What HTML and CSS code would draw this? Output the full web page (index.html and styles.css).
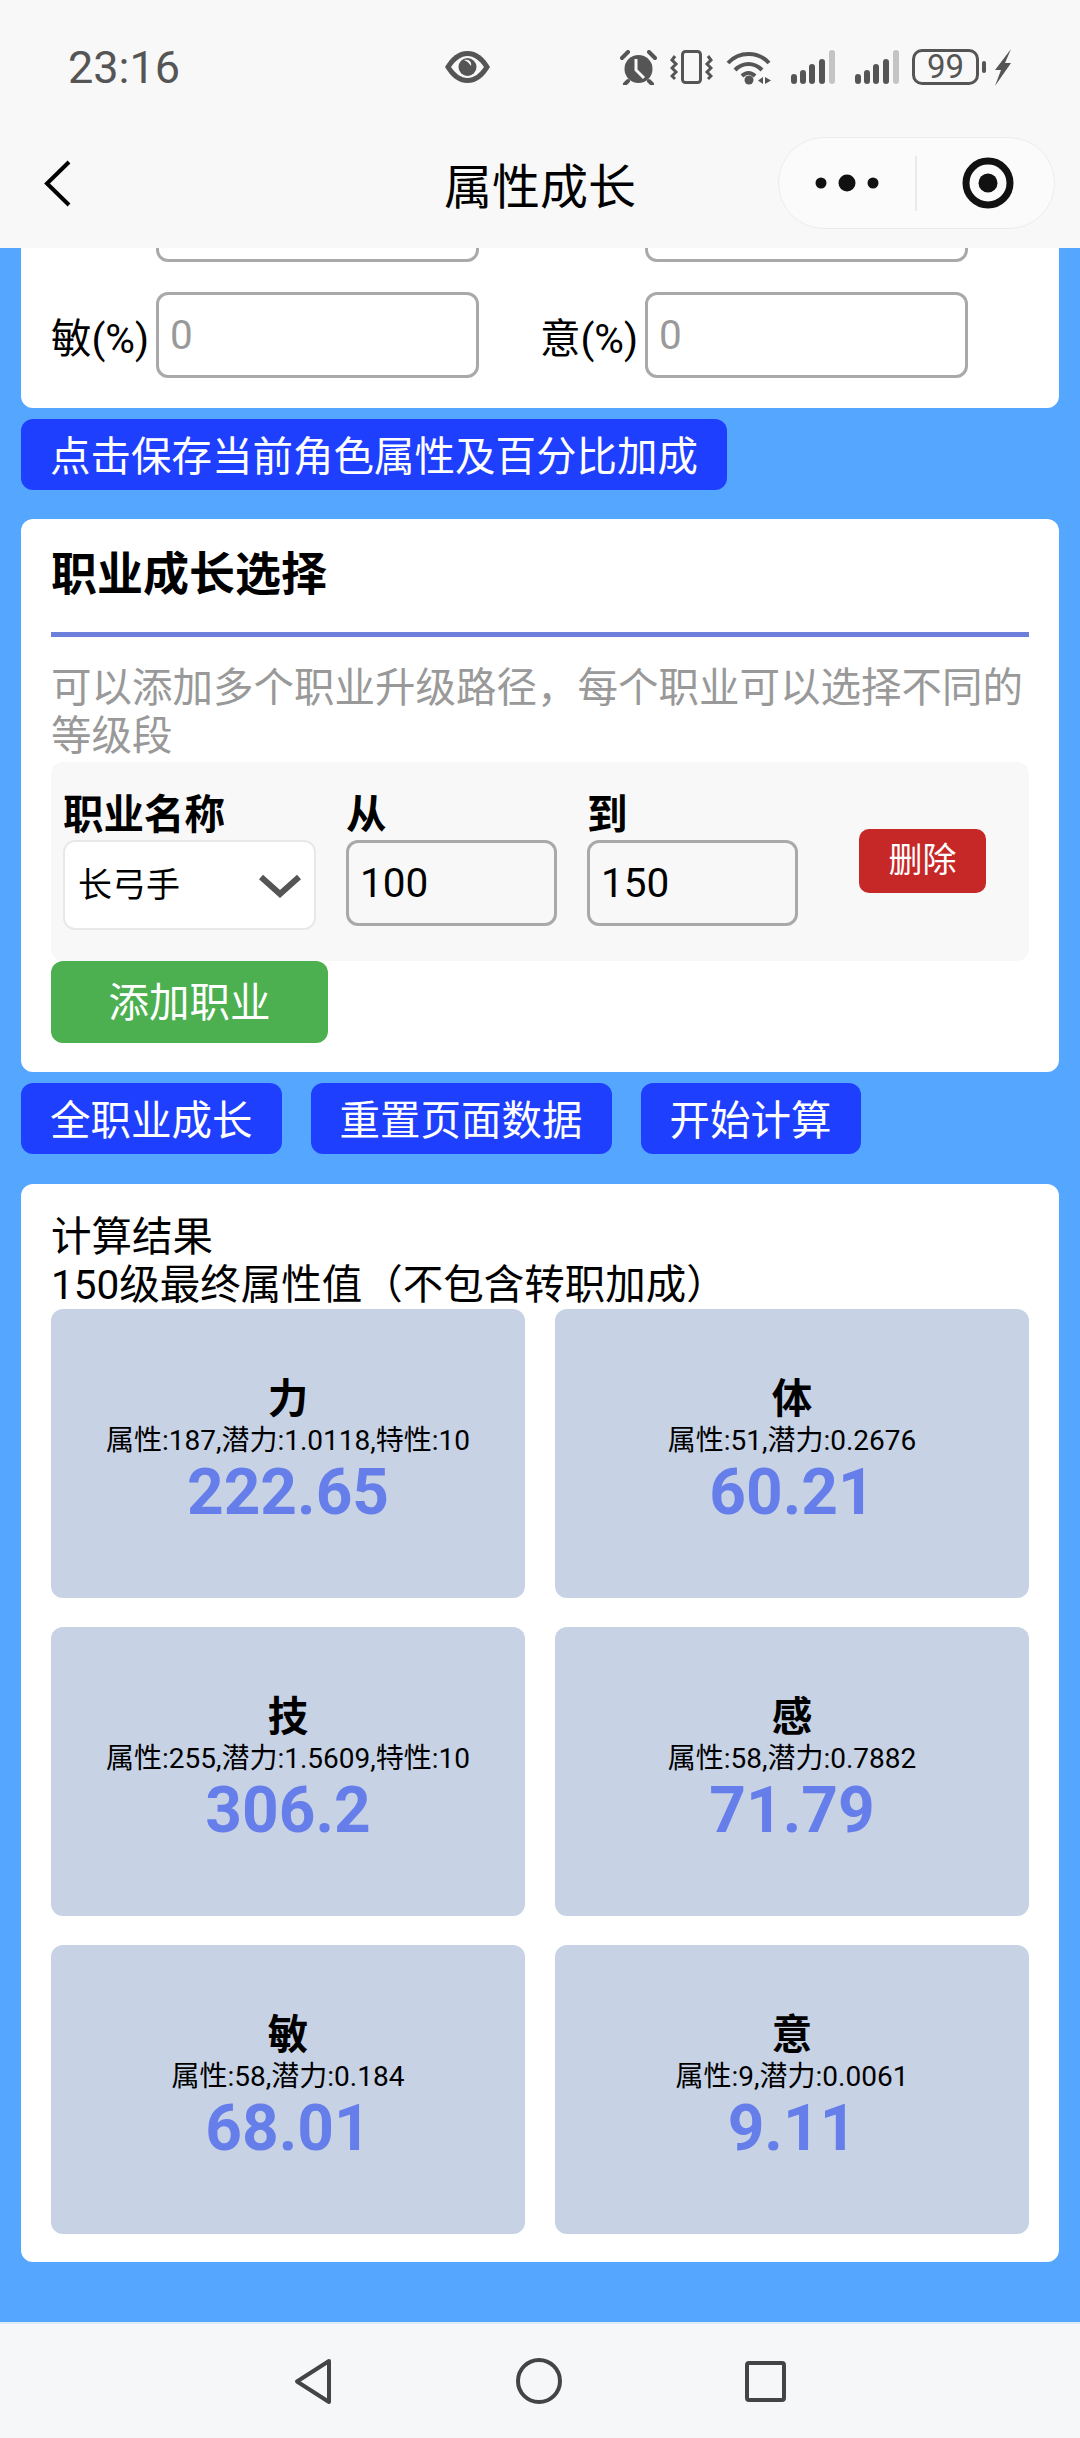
FILE: index.html
```html
<!DOCTYPE html>
<html lang="zh-CN">
<head>
    <meta charset="UTF-8">
    <meta name="viewport" content="width=device-width, initial-scale=1.0">
    <title>属性成长</title>
    <link rel="stylesheet" href="styles.css">
</head>
<body>
    <header class="top">
        <div class="status">
            <span class="time">23:16</span>
            <svg class="eye" width="45" height="32" viewBox="0 0 45 32">
                <path fill="#555" d="M0 16C6 6 13 0 22.5 0S39 6 45 16C39 26 32 32 22.5 32S6 26 0 16Z"/>
                <path fill="#f8f8f8" d="M6 16C11 9 16 5 22.5 5S34 9 39 16C34 23 29 27 22.5 27S11 23 6 16Z"/>
                <circle cx="22.5" cy="16" r="9" fill="#555"/>
                <path fill="#f8f8f8" d="M19 9C24 8 27 11 26 15C24 12 22 10 19 9Z"/>
            </svg>
            <div class="status-icons">
                <svg width="37" height="35" viewBox="0 0 37 35">
                    <circle cx="18.5" cy="19" r="14" fill="#555"/>
                    <path d="M16 9V20L24 28" fill="none" stroke="#f8f8f8" stroke-width="3"/>
                    <path d="M2 8L8 2M29 2L35 8M8 31L5 34M29 31L32 34" stroke="#555" stroke-width="4" stroke-linecap="round"/>
                </svg>
                <svg width="43" height="34" viewBox="0 0 43 34">
                    <rect x="12.5" y="1.5" width="18" height="31" rx="3" fill="none" stroke="#555" stroke-width="3"/>
                    <path d="M5 6L2 10L6 14L2 18L6 22L2 26L5 29M38 6L41 10L37 14L41 18L37 22L41 26L38 29" fill="none" stroke="#555" stroke-width="3"/>
                </svg>
                <svg width="45" height="35" viewBox="0 0 45 35">
                    <path d="M2 13C13 1 32 1 43 13M9 20C17 12 28 12 36 20M16 26C20 22 25 22 29 26" fill="none" stroke="#555" stroke-width="4"/>
                    <circle cx="23" cy="30" r="4.5" fill="#555"/>
                    <path d="M37 27V34L32 30.500ZM39 27V34L45 30.500Z" fill="#555"/>
                </svg>
                <svg width="44" height="35" viewBox="0 0 44 35">
                    <rect x="0" y="24" width="6" height="10" rx="3" fill="#555"/>
                    <rect x="9" y="20" width="6" height="14" rx="3" fill="#555"/>
                    <rect x="18" y="14" width="6" height="20" rx="3" fill="#555"/>
                    <rect x="28" y="9" width="6" height="25" rx="3" fill="#555"/>
                    <rect x="38" y="0" width="6" height="34" rx="3" fill="#c4c4c4"/>
                </svg>
                <svg width="44" height="35" viewBox="0 0 44 35">
                    <rect x="0" y="24" width="6" height="10" rx="3" fill="#555"/>
                    <rect x="9" y="20" width="6" height="14" rx="3" fill="#555"/>
                    <rect x="18" y="14" width="6" height="20" rx="3" fill="#555"/>
                    <rect x="28" y="9" width="6" height="25" rx="3" fill="#555"/>
                    <rect x="38" y="0" width="6" height="34" rx="3" fill="#c4c4c4"/>
                </svg>
                <div class="battery">
                    <span class="battery-box">99</span>
                    <span class="battery-tip"></span>
                </div>
                <svg width="18" height="37" viewBox="0 0 18 37">
                    <path fill="#555" d="M17 0L1 21H7L1 37L17 14H11Z"/>
                </svg>
            </div>
        </div>
        <div class="nav">
            <svg class="back" width="27" height="47" viewBox="0 0 27 47">
                <path d="M25 2L3 23.500L25 45" fill="none" stroke="#000" stroke-width="4"/>
            </svg>
            <h1>属性成长</h1>
            <div class="capsule">
                <svg width="275" height="90" viewBox="0 0 275 90">
                    <circle cx="42" cy="45" r="5.500" fill="#111"/>
                    <circle cx="68" cy="45" r="8.500" fill="#111"/>
                    <circle cx="94" cy="45" r="5.500" fill="#111"/>
                    <path d="M137 18V73" stroke="#eaeaea" stroke-width="2"/>
                    <circle cx="209" cy="45" r="22" fill="none" stroke="#111" stroke-width="7"/>
                    <circle cx="209" cy="45" r="9.500" fill="#111"/>
                </svg>
            </div>
        </div>
    </header>

    <main class="page">
        <section class="card card-percent">
            <div class="percent-grid">
                <div class="field"><span class="field-label"></span><input type="text" placeholder="0"></div>
                <div class="field"><span class="field-label"></span><input type="text" placeholder="0"></div>
                <div class="field"><label class="field-label">敏(%)</label><input type="text" placeholder="0"></div>
                <div class="field"><label class="field-label">意(%)</label><input type="text" placeholder="0"></div>
            </div>
        </section>
        <div class="actions actions-save">
            <button class="btn">点击保存当前角色属性及百分比加成</button>
        </div>

        <section class="card card-job">
            <h2>职业成长选择</h2>
            <p class="hint">可以添加多个职业升级路径，每个职业可以选择不同的等级段</p>
            <div class="job-row">
                <div class="job-col job-name">
                    <label>职业名称</label>
                    <div class="select-wrap">
                        <select><option>长弓手</option></select>
                        <svg class="chevron" width="42" height="24" viewBox="0 0 42 24">
                            <path d="M2 3L21 20L40 3" fill="none" stroke="#555" stroke-width="6"/>
                        </svg>
                    </div>
                </div>
                <div class="job-col">
                    <label>从</label>
                    <input type="text" value="100">
                </div>
                <div class="job-col">
                    <label>到</label>
                    <input type="text" value="150">
                </div>
                <button class="btn-delete">删除</button>
            </div>
            <button class="btn-add">添加职业</button>
        </section>

        <div class="actions actions-main">
            <button class="btn">全职业成长</button>
            <button class="btn">重置页面数据</button>
            <button class="btn">开始计算</button>
        </div>

        <section class="card card-result">
            <div class="result-title">计算结果<br>150级最终属性值（不包含转职加成）</div>
            <div class="result-grid">
                <div class="stat">
                    <div class="stat-name">力</div>
                    <div class="stat-info">属性:187,潜力:1.0118,特性:10</div>
                    <div class="stat-value">222.65</div>
                </div>
                <div class="stat">
                    <div class="stat-name">体</div>
                    <div class="stat-info">属性:51,潜力:0.2676</div>
                    <div class="stat-value">60.21</div>
                </div>
                <div class="stat">
                    <div class="stat-name">技</div>
                    <div class="stat-info">属性:255,潜力:1.5609,特性:10</div>
                    <div class="stat-value">306.2</div>
                </div>
                <div class="stat">
                    <div class="stat-name">感</div>
                    <div class="stat-info">属性:58,潜力:0.7882</div>
                    <div class="stat-value">71.79</div>
                </div>
                <div class="stat">
                    <div class="stat-name">敏</div>
                    <div class="stat-info">属性:58,潜力:0.184</div>
                    <div class="stat-value">68.01</div>
                </div>
                <div class="stat">
                    <div class="stat-name">意</div>
                    <div class="stat-info">属性:9,潜力:0.0061</div>
                    <div class="stat-value">9.11</div>
                </div>
            </div>
        </section>
    </main>

    <footer class="bottom">
        <svg width="39" height="47" viewBox="0 0 39 47">
            <path d="M35 3L3 23.500L35 44Z" fill="none" stroke="#444" stroke-width="4" stroke-linejoin="round"/>
        </svg>
        <svg width="46" height="46" viewBox="0 0 46 46">
            <circle cx="23" cy="23" r="21" fill="none" stroke="#444" stroke-width="4"/>
        </svg>
        <svg width="41" height="43" viewBox="0 0 41 43">
            <rect x="2" y="3" width="37" height="37" rx="2" fill="none" stroke="#444" stroke-width="4"/>
        </svg>
    </footer>
</body>
</html>
```

FILE: styles.css
```css
* {
    box-sizing: border-box;
}
body {
    margin: 0;
    width: 1080px;
    height: 2438px;
    overflow: hidden;
    display: flex;
    flex-direction: column;
    background-color: #55a6ff;
    font-family: Roboto, "Noto Sans CJK SC", sans-serif;
    font-size: 40.5px;
    color: #000;
}

/* top bars */
.top {
    flex: none;
    height: 248px;
    background-color: #f8f8f8;
    position: relative;
    z-index: 1;
}
.status {
    height: 134px;
    padding: 0 68px;
    display: flex;
    align-items: center;
    color: #555;
}
.time {
    width: 377px;
    font-size: 45px;
}
.status-icons {
    margin-left: auto;
    display: flex;
    align-items: center;
    gap: 13px;
}
.status-icons svg {
    display: block;
}
.status-icons svg:nth-child(4),
.status-icons svg:nth-child(5) {
    margin-left: 7px;
}
.battery {
    display: flex;
    align-items: center;
    gap: 3px;
    margin-right: -5px;
}
.battery-box {
    width: 67px;
    height: 36px;
    border: 3px solid #555;
    border-radius: 10px;
    font-size: 33px;
    line-height: 30px;
    text-align: center;
}
.battery-tip {
    width: 4px;
    height: 12px;
    border-radius: 2px;
    background-color: #555;
}
.nav {
    height: 114px;
    padding: 0 25px 16px;
    display: grid;
    grid-template-columns: 1fr auto 1fr;
    align-items: center;
}
.back {
    margin-left: 19px;
}
.nav h1 {
    margin: 0;
    font-size: 48px;
    font-weight: 400;
}
.capsule {
    justify-self: end;
    width: 277px;
    height: 92px;
    border: 1px solid #ececec;
    border-radius: 46px;
    background-color: #fbfbfb;
}
.capsule svg {
    display: block;
}

/* page */
.page {
    flex: 1;
    min-height: 0;
    overflow: hidden;
    padding: 0 21px;
}
.card {
    background-color: #fff;
    border-radius: 12px;
    padding: 30px;
}
.card-percent {
    margin-top: -102px;
}
.percent-grid {
    display: grid;
    grid-template-columns: 1fr 1fr;
    row-gap: 30px;
}
.field {
    display: flex;
    align-items: center;
    gap: 9px;
}
.field-label {
    width: 96px;
    white-space: nowrap;
}
.field input {
    width: 323px;
}
input {
    height: 86px;
    padding: 0 11px;
    border: 3px solid #a9a9a9;
    border-radius: 12px;
    background: transparent;
    font-family: inherit;
    font-size: 40.5px;
    color: #000;
}
input::placeholder {
    color: #999;
}
.actions {
    display: flex;
    gap: 29px;
    margin-top: 11px;
}
.actions-save {
    margin-bottom: 29px;
}
.actions-main {
    margin-bottom: 30px;
}
.btn {
    height: 71px;
    padding: 0 29px 3px;
    border: none;
    border-radius: 12px;
    background-color: #1f3fff;
    color: #fff;
    font-family: inherit;
    font-size: 40.5px;
}

/* job card */
.card-job {
    padding-bottom: 29px;
}
.card-job h2 {
    margin: 0;
    padding-bottom: 33px;
    border-bottom: 5px solid #6b7fdb;
    font-size: 46px;
    line-height: 50px;
    font-weight: 700;
}
.hint {
    margin: 27px 0 2px;
    line-height: 48px;
    color: #999;
}
.job-row {
    display: flex;
    gap: 30px;
    padding: 28px 12px 31px;
    border-radius: 12px;
    background-color: #f8f8f8;
}
.job-col {
    width: 211px;
    display: flex;
    flex-direction: column;
}
.job-name {
    width: 253px;
}
.job-col label {
    height: 50px;
    padding-top: 1px;
    line-height: 48px;
    font-weight: 700;
}
.job-col input {
    width: 100%;
}
.select-wrap {
    position: relative;
    height: 90px;
}
.select-wrap select {
    width: 100%;
    height: 100%;
    padding: 0 13px;
    border: 2px solid #e8e8e8;
    border-radius: 12px;
    background-color: #fff;
    appearance: none;
    font-family: inherit;
    font-size: 34px;
    color: #000;
}
.chevron {
    position: absolute;
    right: 15px;
    top: 34px;
}
.btn-delete {
    align-self: center;
    width: 127px;
    height: 64px;
    margin: 2px 0 0 31px;
    padding: 0 0 7px;
    border: none;
    border-radius: 10px;
    background-color: #c62828;
    color: #fff;
    font-family: inherit;
    font-size: 34px;
}
.btn-add {
    display: block;
    width: 277px;
    height: 82px;
    padding: 0 0 5px;
    border: none;
    border-radius: 12px;
    background-color: #4caf50;
    color: #fff;
    font-family: inherit;
    font-size: 40.5px;
}

/* result card */
.card-result {
    padding-bottom: 28px;
}
.result-title {
    line-height: 48px;
    margin-top: -1px;
}
.result-grid {
    display: grid;
    grid-template-columns: 1fr 1fr;
    grid-auto-rows: 289px;
    gap: 29px 30px;
}
.stat {
    padding-top: 66px;
    border-radius: 12px;
    background-color: #c7d2e5;
    text-align: center;
}
.stat-name {
    font-weight: 700;
    line-height: 48px;
}
.stat-info {
    font-size: 28px;
    line-height: 36px;
}
.stat-value {
    margin-top: 1px;
    font-size: 64px;
    line-height: 66px;
    font-weight: 700;
    color: #667eea;
}

/* android nav */
.bottom {
    flex: none;
    height: 116px;
    border-top: 2px solid #dcecf8;
    background-color: #f6f7f8;
    display: flex;
    justify-content: center;
    align-items: center;
    gap: 183px;
}
```
